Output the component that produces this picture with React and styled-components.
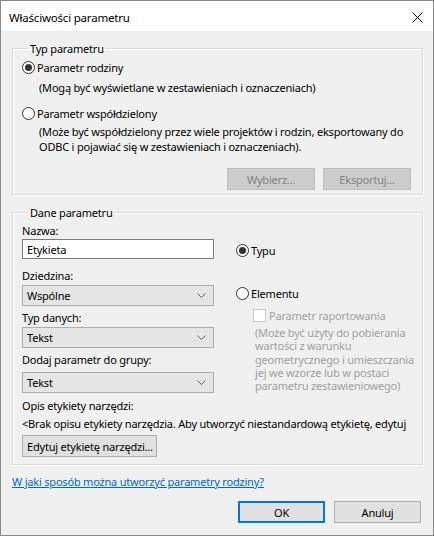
import React from 'react';
import styled, { createGlobalStyle } from 'styled-components';

const Global = createGlobalStyle`
  html, body { margin: 0; padding: 0; background: #f0f0f0; }
  * { box-sizing: border-box; }
`;

const Window = styled.div`
  width: 434px;
  height: 536px;
  border: 1px solid #8a8a8a;
  background: #f0f0f0;
  font-family: "Noto Sans", "Open Sans", sans-serif;
  font-size: 11px;
  letter-spacing: -0.2px;
  color: #000;
  display: flex;
  flex-direction: column;
`;

const TitleBar = styled.div`
  height: 30px;
  background: #fff;
  display: flex;
  align-items: center;
  justify-content: space-between;
  padding: 2px 10px 0 8px;
  font-size: 11.5px;
`;

const Body = styled.div`
  flex: 1;
  padding: 10px 10px 0 11px;
  display: flex;
  flex-direction: column;
`;

const Group = styled.fieldset`
  margin: ${p => p.$top || 0}px 0 0 0;
  padding: ${p => p.$pad};
  border: 1px solid #dcdcdc;
  box-shadow: 1px 1px 0 #fff, inset 1px 1px 0 #fff;
  min-width: 0;
`;

const Legend = styled.legend`
  padding: 0 2px;
  margin-left: 6px;
  line-height: 15px;
`;

const RadioRow = styled.label`
  display: flex;
  align-items: center;
  height: 15px;
  gap: 2px;
  margin-top: ${p => p.$top || 0}px;
`;

const RadioCircle = styled.span`
  width: 13px;
  height: 13px;
  border-radius: 50%;
  border: 1px solid #333;
  background: #fff;
  display: flex;
  align-items: center;
  justify-content: center;
  flex: none;
  &::after {
    content: '';
    width: 7px;
    height: 7px;
    border-radius: 50%;
    background: ${p => (p.$checked ? '#333' : 'transparent')};
  }
`;

const Text = styled.div`
  line-height: ${p => p.$lh || 15}px;
  margin-top: ${p => p.$top || 0}px;
  padding-left: ${p => p.$indent || 0}px;
  color: ${p => (p.$muted ? '#a0a0a0' : '#000')};
  white-space: nowrap;
`;

const ButtonRow = styled.div`
  display: flex;
  justify-content: flex-end;
  gap: ${p => p.$gap || 8}px;
  margin-top: ${p => p.$top || 0}px;
  padding-right: ${p => p.$right || 0}px;
`;

const Button = styled.button`
  font: inherit;
  letter-spacing: inherit;
  white-space: nowrap;
  width: ${p => p.$w || 88}px;
  height: 22px;
  padding: 0 4px;
  background: ${p => (p.disabled ? '#cccccc' : '#e1e1e1')};
  color: ${p => (p.disabled ? '#838383' : '#000')};
  border: ${p => (p.$primary ? '2px solid #0078d7' : `1px solid ${p.disabled ? '#bfbfbf' : '#adadad'}`)};
  margin-top: ${p => p.$top || 0}px;
  text-align: center;
`;

const Columns = styled.div`
  display: grid;
  grid-template-columns: 192px 1fr;
  column-gap: 22px;
  margin-top: 3px;
`;

const Stack = styled.div`
  display: flex;
  flex-direction: column;
  padding-top: ${p => p.$top || 0}px;
`;

const Input = styled.div`
  height: 20px;
  margin-top: ${p => p.$top || 0}px;
  border: 1px solid #7a7a7a;
  background: #fff;
  padding-left: 4px;
  display: flex;
  align-items: center;
`;

const Select = styled.div`
  height: 21px;
  margin-top: ${p => p.$top || 0}px;
  border: 1px solid #adadad;
  background: #e5e5e5;
  padding: 0 7px 0 4px;
  display: flex;
  align-items: center;
  justify-content: space-between;
`;

const CheckRow = styled.div`
  display: flex;
  align-items: center;
  height: 15px;
  gap: 3px;
  margin: ${p => p.$top || 0}px 0 0 17px;
  color: #a0a0a0;
`;

const CheckBox = styled.span`
  width: 13px;
  height: 13px;
  border: 1px solid #cccccc;
  background: #fff;
`;

const Link = styled.a`
  color: #0066cc;
  text-decoration: underline;
  line-height: 15px;
  margin-top: 9px;
  align-self: flex-start;
`;

const Chevron = () => (
  <svg width="9" height="5" viewBox="0 0 9 5">
    <path d="M0.5 0.5 L4.5 4.5 L8.5 0.5" fill="none" stroke="#606060" strokeWidth="1" />
  </svg>
);

const CloseIcon = () => (
  <svg width="11" height="11" viewBox="0 0 11 11">
    <path d="M0.5 0.5 L10.5 10.5 M10.5 0.5 L0.5 10.5" stroke="#000" strokeWidth="1" />
  </svg>
);

export default function App() {
  return (
    <>
      <Global />
      <Window>
        <TitleBar>
          <span>Właściwości parametru</span>
          <CloseIcon />
        </TitleBar>
        <Body>
          <Group $pad="0 11px 4px 9px">
            <Legend>Typ parametru</Legend>
            <RadioRow $top={4}>
              <RadioCircle $checked />
              Parametr rodziny
            </RadioRow>
            <Text $top={5} $indent={17}>(Mogą być wyświetlane w zestawieniach i oznaczeniach)</Text>
            <RadioRow $top={11}>
              <RadioCircle />
              Parametr współdzielony
            </RadioRow>
            <Text $top={3} $indent={17}>
              (Może być współdzielony przez wiele projektów i rodzin, eksportowany do
              <br />
              ODBC i pojawiać się w zestawieniach i oznaczeniach).
            </Text>
            <ButtonRow $top={14}>
              <Button disabled>Wybierz...</Button>
              <Button disabled>Eksportuj...</Button>
            </ButtonRow>
          </Group>

          <Group $top={10} $pad="0 10px 7px 9px">
            <Legend>Dane parametru</Legend>
            <Columns>
              <Stack>
                <Text>Nazwa:</Text>
                <Input $top={1}>Etykieta</Input>
                <Text $top={9}>Dziedzina:</Text>
                <Select $top={2}>
                  Wspólne
                  <Chevron />
                </Select>
                <Text $top={4}>Typ danych:</Text>
                <Select $top={2}>
                  Tekst
                  <Chevron />
                </Select>
                <Text $top={4}>Dodaj parametr do grupy:</Text>
                <Select $top={5}>
                  Tekst
                  <Chevron />
                </Select>
              </Stack>
              <Stack $top={20}>
                <RadioRow>
                  <RadioCircle $checked />
                  Typu
                </RadioRow>
                <RadioRow $top={28}>
                  <RadioCircle />
                  Elementu
                </RadioRow>
                <CheckRow $top={7}>
                  <CheckBox />
                  Parametr raportowania
                </CheckRow>
                <Text $muted $lh={13.3} $top={3} $indent={19}>
                  (Może być użyty do pobierania
                  <br />
                  wartości z warunku
                  <br />
                  geometrycznego i umieszczania
                  <br />
                  jej we wzorze lub w postaci
                  <br />
                  parametru zestawieniowego)
                </Text>
              </Stack>
            </Columns>
            <Text $top={5}>Opis etykiety narzędzi:</Text>
            <Text $top={3}>&lt;Brak opisu etykiety narzędzia. Aby utworzyć niestandardową etykietę, edytuj</Text>
            <Button $w={135} $top={4}>Edytuj etykietę narzędzi...</Button>
          </Group>

          <Link href="#">W jaki sposób można utworzyć parametry rodziny?</Link>

          <ButtonRow $top={12} $gap={9} $right={2}>
            <Button $primary $w={87}>OK</Button>
            <Button $w={87}>Anuluj</Button>
          </ButtonRow>
        </Body>
      </Window>
    </>
  );
}
